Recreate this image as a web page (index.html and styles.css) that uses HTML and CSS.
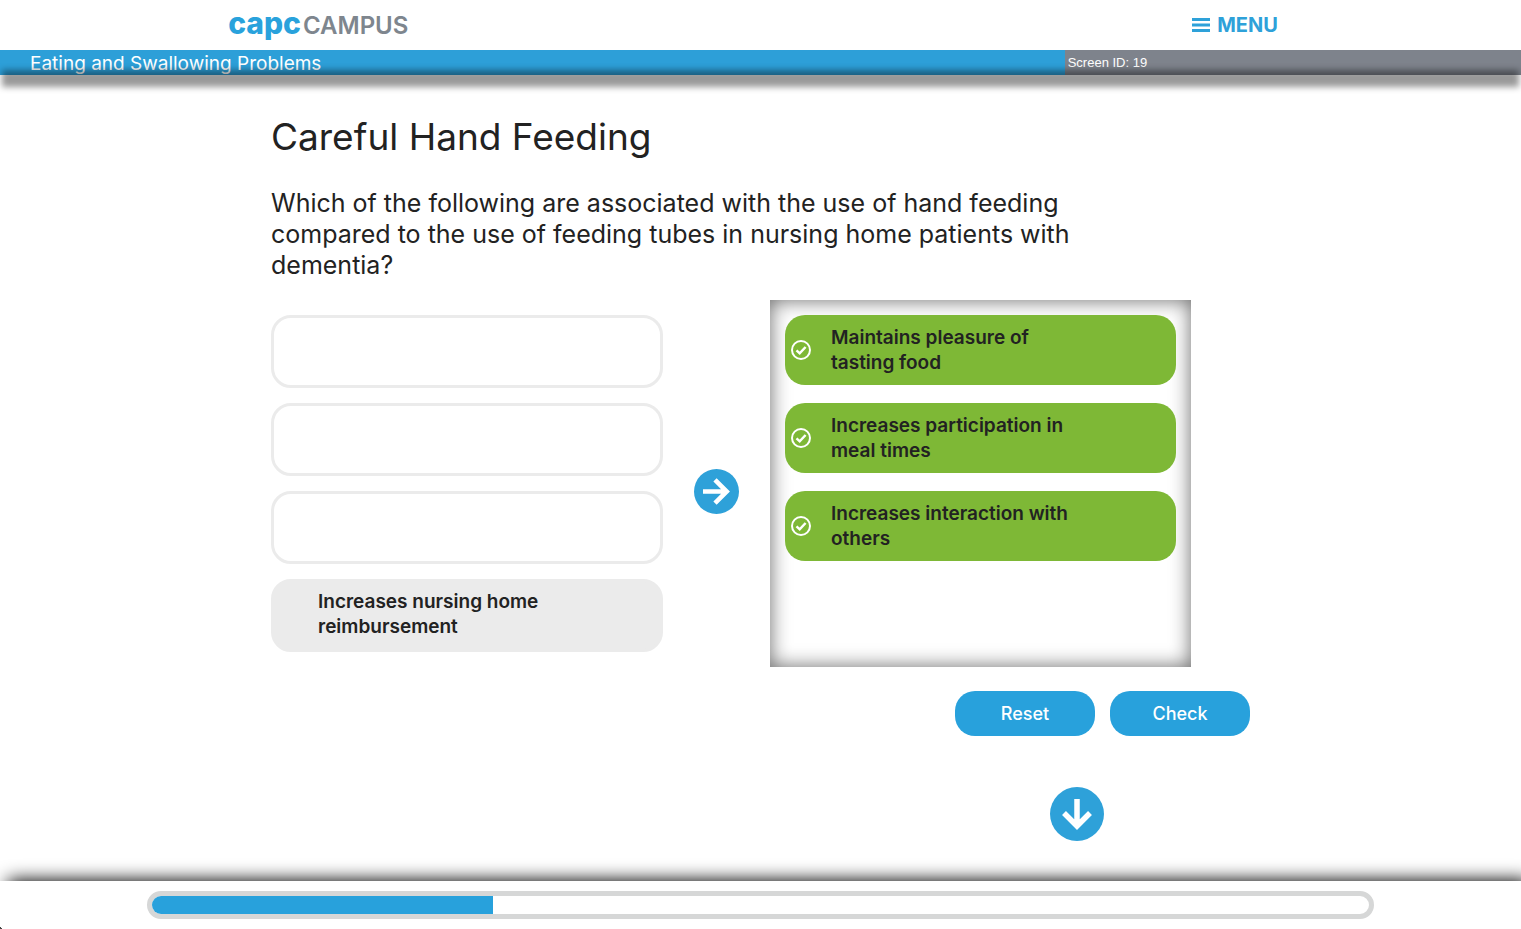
FILE: index.html
```html
<!DOCTYPE html>
<html lang="en">
<head>
<meta charset="utf-8">
<meta name="viewport" content="width=device-width, initial-scale=1">
<title>Careful Hand Feeding - CAPC Campus</title>
<link rel="stylesheet" href="styles.css">
</head>
<body>
<header class="site-header">
  <div class="brand-row">
    <a class="brand" href="#"><span class="brand-capc">capc</span><span class="brand-campus">CAMPUS</span></a>
    <button class="menu-button" type="button">
      <svg class="menu-icon" viewBox="0 0 18 14" aria-hidden="true"><path d="M0 1.5h18M0 7h18M0 12.5h18" stroke="currentColor" stroke-width="3"/></svg>
      MENU
    </button>
  </div>
  <div class="course-bar">
    <div class="course-title">Eating and Swallowing Problems</div>
    <div class="screen-id">Screen ID: 19</div>
  </div>
</header>

<main class="content">
  <h1 class="title">Careful Hand Feeding</h1>
  <p class="question">Which of the following are associated with the use of hand feeding compared to the use of feeding tubes in nursing home patients with dementia?</p>

  <div class="board">
    <ul class="source">
      <li class="slot"></li>
      <li class="slot"></li>
      <li class="slot"></li>
      <li class="slot slot-filled"><span class="label">Increases nursing home reimbursement</span></li>
    </ul>
    <svg class="move-arrow" viewBox="0 0 45 45" role="img" aria-label="Drag to the right">
      <circle cx="22.500" cy="22.500" r="22.500" fill="#2ea1d9"/>
      <path d="M9 22.500H33M21 10.800 32.700 22.500 21 34.200" fill="none" stroke="#fff" stroke-width="4.600"/>
    </svg>
    <ul class="target">
      <li class="answer"><svg class="tick" viewBox="0 0 20 20" aria-hidden="true"><circle cx="10" cy="10" r="9"/><path class="tick-mark" d="M5.500 10.300 8.700 13.300 14.600 7"/></svg><span class="label">Maintains pleasure of tasting food</span></li>
      <li class="answer"><svg class="tick" viewBox="0 0 20 20" aria-hidden="true"><circle cx="10" cy="10" r="9"/><path class="tick-mark" d="M5.500 10.300 8.700 13.300 14.600 7"/></svg><span class="label">Increases participation in meal times</span></li>
      <li class="answer"><svg class="tick" viewBox="0 0 20 20" aria-hidden="true"><circle cx="10" cy="10" r="9"/><path class="tick-mark" d="M5.500 10.300 8.700 13.300 14.600 7"/></svg><span class="label">Increases interaction with others</span></li>
    </ul>
  </div>

  <div class="actions">
    <button class="action" type="button">Reset</button>
    <button class="action" type="button">Check</button>
  </div>
  <div class="next-row">
    <button class="next" type="button" aria-label="Next screen">
      <svg class="next-icon" viewBox="0 0 54 54" aria-hidden="true">
        <circle cx="27" cy="27" r="27" fill="#2ea1d9"/>
        <path d="M27 12V40M14 26 27 39 40 26" fill="none" stroke="#fff" stroke-width="5.500"/>
      </svg>
    </button>
  </div>
</main>

<footer class="site-footer">
  <div class="progress" role="progressbar" aria-label="Course progress" aria-valuemin="0" aria-valuemax="100" aria-valuenow="28">
    <div class="progress-fill" style="width: 28%"></div>
  </div>
  <span class="corner"></span>
</footer>
</body>
</html>
```

FILE: styles.css
```css
* { box-sizing: border-box; }

body {
  display: flex;
  flex-direction: column;
  min-height: 100vh;
  margin: 0;
  background: #fff;
  color: #222;
  font-family: Inter, "Liberation Sans", sans-serif;
}

ul { list-style: none; margin: 0; padding: 0; }
button { border: 0; padding: 0; font: inherit; cursor: pointer; }

.site-header { position: relative; }

/* soft band that straddles the lower edge of the course bar */
.site-header::after {
  content: "";
  position: absolute;
  left: 2px;
  right: 2px;
  bottom: -12px;
  height: 17px;
  background: rgba(0, 0, 0, .4);
  filter: blur(3px);
  pointer-events: none;
}

.brand-row {
  display: flex;
  justify-content: space-between;
  align-items: center;
  width: 70%;
  height: 50px;
  margin: 0 auto;
  padding-right: 15px;
}

.brand {
  display: flex;
  align-items: baseline;
  gap: 2px;
  padding-bottom: 2px;
  text-decoration: none;
  line-height: 32px;
}
.brand-capc { color: #29a2dc; font-size: 30px; font-weight: 800; }
.brand-campus { color: #7e868e; font-size: 24px; font-weight: 600; }

.menu-button {
  display: flex;
  align-items: center;
  gap: 7px;
  background: none;
  color: #2ea1d9;
  font-size: 20px;
  font-weight: 700;
}
.menu-icon { width: 18px; height: 14px; }

.course-bar { display: flex; height: 25px; color: #fff; }
.course-title {
  width: 70%;
  padding-left: 30px;
  background: #2d9fd8;
  font-size: 19px;
  line-height: 27px;
}
.screen-id {
  flex: 1;
  padding-left: 3px;
  background: #7e838c;
  font-family: "Liberation Sans", Arial, sans-serif;
  font-size: 13px;
  line-height: 25px;
}

.content {
  flex: 1;
  width: 100%;
  max-width: 979px;
  margin: 0 auto;
  padding-bottom: 40px;
}

.title {
  margin: 36px 0 0;
  font-size: 37px;
  font-weight: 400;
  line-height: 52px;
}
.question {
  max-width: 830px;
  margin: 25px 0 19px;
  font-size: 25px;
  line-height: 31px;
}

.board {
  display: grid;
  grid-template-columns: 392fr 107fr 421fr;
  max-width: 920px;
}
.source {
  display: grid;
  gap: 15px;
  align-content: start;
  padding: 15px 0;
}
.slot {
  min-height: 73px;
  border: 3px solid #ebebeb;
  border-radius: 20px;
}
.slot-filled { padding: 7px 44px; background: #ebebeb; }
.label {
  display: block;
  max-width: 256px;
  font-size: 19px;
  font-weight: 600;
  line-height: 25px;
}

.move-arrow {
  width: 45px;
  height: 45px;
  align-self: center;
  justify-self: center;
  margin-top: 15px;
}

.target {
  display: grid;
  gap: 18px;
  align-content: start;
  padding: 15px;
  box-shadow: inset 0 0 20px rgba(0, 0, 0, .6);
}
.answer {
  display: flex;
  align-items: center;
  gap: 20px;
  min-height: 70px;
  padding: 10px 40px 10px 6px;
  border-radius: 20px;
  background: #7eb836;
}
.tick {
  flex: none;
  width: 20px;
  height: 20px;
  fill: none;
  stroke: #fff;
  stroke-width: 2;
}
.tick-mark { stroke-width: 2.500; }

.actions {
  display: flex;
  justify-content: flex-end;
  gap: 15px;
  margin-top: 24px;
}
.action {
  width: 140px;
  height: 45px;
  border-radius: 20px;
  background: #28a1dc;
  color: #fff;
  font-size: 18px;
  font-weight: 500;
}

.next-row {
  display: flex;
  justify-content: flex-end;
  margin-top: 51px;
  padding-right: 146px;
}
.next { background: none; border-radius: 50%; }
.next-icon { display: block; width: 54px; height: 54px; }

.site-footer {
  position: relative;
  padding: 10px 0;
  background: #fff;
  box-shadow: 8px -1px 18px #000;
}
.progress {
  box-sizing: content-box;
  width: 80%;
  height: 18px;
  margin: 0 auto;
  overflow: hidden;
  border: 5px solid #d6d7d7;
  border-radius: 14px;
}
.progress-fill { height: 100%; background: #28a1dc; }

/* dark notch of the window frame */
.corner {
  position: absolute;
  left: 0;
  bottom: 0;
  width: 4px;
  height: 4px;
  background: radial-gradient(circle at 100% 0, transparent 4px, #444 4px);
}
```
